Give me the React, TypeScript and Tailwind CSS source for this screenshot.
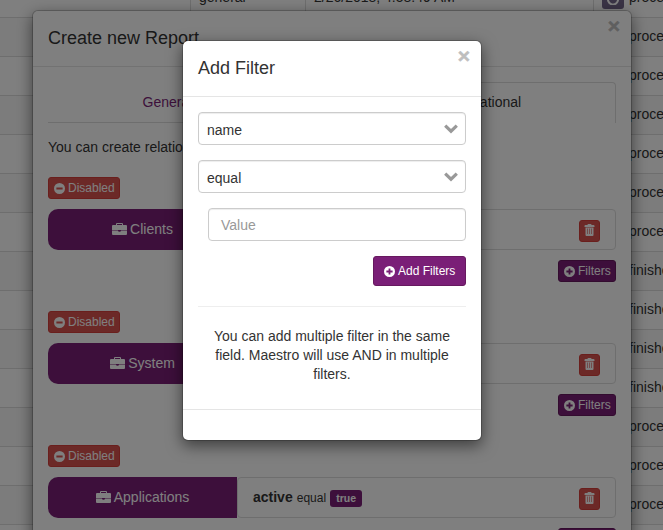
import React from "react";

const PLUS =
  "M6 0a6 6 0 1 0 0 12a6 6 0 1 0 0-12z M5 2.6h2v2.4h2.4v2H7v2.4H5V7H2.6V5H5z";
const MINUS = "M6 0a6 6 0 1 0 0 12a6 6 0 1 0 0-12z M2.6 5h6.8v2H2.6z";

function Disc({ d }: { d: string }) {
  return (
    <svg viewBox="0 0 12 12" className="h-[11px] w-[11px] shrink-0" fill="currentColor">
      <path fillRule="evenodd" d={d} />
    </svg>
  );
}

function Briefcase() {
  return (
    <svg viewBox="0 0 15 12" className="h-3 w-[15px] shrink-0" fill="currentColor">
      <path
        fillRule="evenodd"
        d="M4 2V1Q4 0 5 0h5q1 0 1 1v1h3q1 0 1 1v4H0V3q0-1 1-1zM5 2h5V1H5z"
      />
      <path fillRule="evenodd" d="M0 7.500h6q0 1.300 1.500 1.300T9 7.500h6V11q0 1-1 1H1q-1 0-1-1z" />
    </svg>
  );
}

function Trash() {
  return (
    <svg viewBox="0 0 11 12" className="-mt-px h-3 w-[11px]" fill="currentColor">
      <path
        fillRule="evenodd"
        d="M3.500 1V.8q0-.8.8-.8h2.400q.8 0 .8.8V1h2q1 0 1 1v1H.5V2q0-1 1-1zM1.500 3.500h8V11q0 1-1 1h-6q-1 0-1-1zM3.400 4.500v5.500H4V4.500zM5.200 4.500v5.500h.6V4.500zM7 4.500v5.500h.6V4.500z"
      />
    </svg>
  );
}

function Close({ className }: { className: string }) {
  return (
    <span
      className={`absolute text-[21px] leading-[21px] font-bold text-black opacity-25 [-webkit-text-stroke:0.6px_black] ${className}`}
    >
      ×
    </span>
  );
}

const STATES = [
  "process", "process", "process", "process", "process", "process", "process",
  "finished", "finished", "finished", "finished",
  "process", "process", "process", "process",
];

function Records() {
  return (
    <div className="-mt-[21px] flex w-[800px] flex-col">
      {STATES.map((state, i) => (
        <div key={i} className="flex h-[39px] border-b border-[#ddd] odd:bg-white even:bg-[#f9f9f9]">
          <div className="w-[191px] shrink-0 border-r border-[#ddd]" />
          <div className="w-[115px] shrink-0 border-r border-[#ddd] px-2 pt-2">general</div>
          <div className="w-[288px] shrink-0 border-r border-[#ddd] px-2 pt-2">2/26/2018, 4:58:49 AM</div>
          <div className="flex items-start pt-2 pl-2">
            {i === 0 && (
              <span className="mr-[5px] flex h-[22px] w-[22px] items-center justify-center rounded-[3px] bg-[#75688c] pt-px text-white">
                <svg viewBox="0 0 12 12" className="h-3 w-3" fill="none" stroke="currentColor" strokeWidth="2">
                  <path d="M10 3.500A5 5 0 1 0 11 6M11 1v4H7" />
                </svg>
              </span>
            )}
            <span className={i === 0 ? "" : "pl-[27px]"}>{state}</span>
          </div>
        </div>
      ))}
    </div>
  );
}

function Relation({ name, filter }: { name: string; filter?: boolean }) {
  return (
    <div className="flex h-[134px] flex-col">
      <span className="flex h-[22px] w-[72px] shrink-0 items-center gap-[3px] rounded-[3px] border border-[#d43f3a] bg-[#d9534f] pl-[5px] text-[12px] leading-[18px] text-white">
        <Disc d={MINUS} />
        Disabled
      </span>
      <div className="mt-[10px] flex h-[41px] shrink-0">
        <div className="flex w-[189px] shrink-0 items-center justify-center gap-[3px] rounded-l-[10px] bg-[#7a1f77] pb-[2px] text-white">
          <Briefcase />
          {name}
        </div>
        <div className="flex flex-1 items-center rounded-[4px] border border-[#ddd] px-[15px]">
          {filter && (
            <>
              <b className="pb-px">active</b>
              <span className="ml-1 text-[12px]">equal</span>
              <span className="mt-px ml-1 flex h-[17px] w-8 items-center justify-center rounded-[3px] bg-[#7a1f77] text-[10.500px] font-bold text-white">
                true
              </span>
            </>
          )}
          <span className="mt-[2px] ml-auto flex h-[22px] w-[21px] items-center justify-center rounded-[3px] border border-[#d43f3a] bg-[#d9534f] text-white">
            <Trash />
          </span>
        </div>
      </div>
      <span className="mt-[10px] ml-auto flex h-[22px] w-[58px] shrink-0 items-center gap-[3px] rounded-[3px] border border-[#67195f] bg-[#7a1f77] pl-[5px] text-[12px] text-white">
        <Disc d={PLUS} />
        Filters
      </span>
    </div>
  );
}

function ReportDialog() {
  return (
    <div className="absolute top-[10px] left-8 h-[640px] w-[600px] rounded-[6px] border border-black/20 bg-white bg-clip-padding shadow-[0_5px_15px_rgba(0,0,0,0.5)]">
      <Close className="top-[4px] right-[11px]" />
      <h4 className="h-[56px] border-b border-[#e5e5e5] px-[15px] pt-[15px] text-[18px] leading-[25px]">
        Create new Report
      </h4>
      <div className="p-[15px]">
        <div className="flex h-[41px]">
          <div className="w-[284px] border-b border-[#ddd] pt-[10px] pr-[45px] text-center text-[#7a1f77]">
            General
          </div>
          <div className="flex-1 rounded-t-[4px] border border-b-0 border-[#ddd] pt-[9px] text-center">
            <span className="pl-8">Relational</span>
          </div>
        </div>
        <p className="mt-[14px] mb-[20px] h-5">You can create relationships</p>
        <Relation name="Clients" />
        <Relation name="System" />
        <Relation name="Applications" filter />
      </div>
    </div>
  );
}

function Select({ value }: { value: string }) {
  return (
    <div className="mb-[15px] flex h-[33px] items-center justify-between rounded-[4px] border border-[#ccc] pr-[7px] pl-2 shadow-[inset_0_1px_1px_rgba(0,0,0,0.075)]">
      <span className="pt-[3px]">{value}</span>
      <svg viewBox="0 0 14 10" className="h-[10px] w-[14px]" fill="none" stroke="#999" strokeWidth="3.2">
        <path d="M1.200 1.700L7 7.200l5.800-5.500" />
      </svg>
    </div>
  );
}

function FilterDialog() {
  return (
    <div className="absolute top-10 left-[182px] h-[401px] w-[300px] rounded-[6px] border border-black/20 bg-white bg-clip-padding shadow-[0_5px_15px_rgba(0,0,0,0.5)]">
      <Close className="top-[4px] right-[11px]" />
      <h4 className="h-[56px] border-b border-[#e5e5e5] px-[15px] pt-[15px] text-[18px] leading-[25px]">
        Add Filter
      </h4>
      <div className="flex h-[313px] flex-col border-b border-[#e5e5e5] p-[15px]">
        <Select value="name" />
        <Select value="equal" />
        <div className="ml-[10px] flex h-[33px] items-center rounded-[4px] border border-[#ccc] px-3 pt-px text-[#999] shadow-[inset_0_1px_1px_rgba(0,0,0,0.075)]">
          Value
        </div>
        <button className="mt-[15px] ml-auto flex h-[30px] w-[93px] items-center gap-[3px] rounded-[3px] border border-[#67195f] bg-[#7a1f77] pl-[10px] text-[12px] text-white">
          <Disc d={PLUS} />
          Add Filters
        </button>
        <hr className="my-5 border-[#eee]" />
        <p className="text-center leading-[19px]">
          You can add multiple filter in the same field. Maestro will use AND in multiple filters.
        </p>
      </div>
    </div>
  );
}

export default function App() {
  return (
    <div className="relative h-[530px] w-[663px] overflow-hidden bg-white font-['Liberation_Sans',Arial,sans-serif] text-[14px] leading-5 text-[#333]">
      <Records />
      <ReportDialog />
      <div className="absolute inset-0 bg-black/50" />
      <FilterDialog />
    </div>
  );
}
